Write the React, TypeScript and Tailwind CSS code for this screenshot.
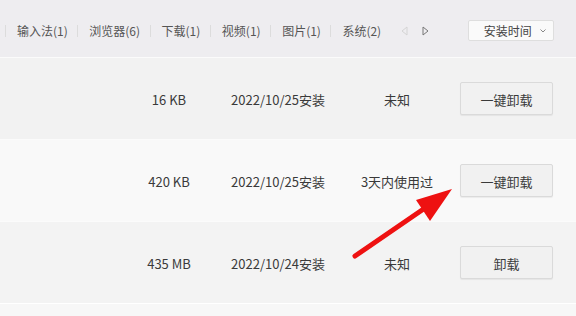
import React from 'react';

const tabs = ['输入法(1)', '浏览器(6)', '下载(1)', '视频(1)', '图片(1)', '系统(2)'];

const rows = [
  { size: '16 KB', date: '2022/10/25安装', status: '未知', action: '一键卸载', bg: 'bg-[#f2f2f2]' },
  { size: '420 KB', date: '2022/10/25安装', status: '3天内使用过', action: '一键卸载', bg: 'bg-[#f9f9f9]' },
  { size: '435 MB', date: '2022/10/24安装', status: '未知', action: '卸载', bg: 'bg-[#f3f3f3]' },
];

const App: React.FC = () => {
  return (
    <div
      className="relative w-[576px] h-[316px] overflow-hidden bg-[#f7f7f7] text-[#333]"
      style={{ fontFamily: '"Microsoft YaHei", "Noto Sans CJK SC", "Noto Sans", sans-serif' }}
    >
      {/* Tab bar */}
      <div className="h-[57px] bg-[#eeedf0] flex items-center pl-[5px] pt-[4px] text-[12px] text-[#555]">
        {tabs.map(t => (
          <div key={t} className="flex items-center">
            <span className="w-px h-[12px] bg-[#dcdcdc]" />
            <span className="ml-[11px] mr-[9.5px] whitespace-nowrap">{t}</span>
          </div>
        ))}
        <div className="flex items-center ml-[10px] gap-[14px]">
          <svg width="7" height="10" viewBox="0 0 7 10">
            <path d="M6 1 L1 5 L6 9 Z" fill="none" stroke="#d4d4d4" strokeWidth="1" />
          </svg>
          <svg width="7" height="10" viewBox="0 0 7 10">
            <path d="M1 1 L6 5 L1 9 Z" fill="none" stroke="#777" strokeWidth="1" />
          </svg>
        </div>
        <div className="ml-[39px] w-[86px] h-[21px] bg-[#fafafa] border border-[#dedede] rounded-[2px] flex items-center pl-[15px] pr-[7px]">
          <span className="text-[12px] text-[#444]">安装时间</span>
          <svg className="ml-auto" width="6" height="4" viewBox="0 0 6 4">
            <path d="M0.5 0.5 L3 3 L5.5 0.5" fill="none" stroke="#888" strokeWidth="1" />
          </svg>
        </div>
      </div>

      {/* Rows */}
      {rows.map((r, i) => (
        <div
          key={i}
          className={`h-[82px] ${r.bg} border-t border-[#fbfbfb] flex items-center text-[13px] text-[#3a3a3a]`}
        >
          <div className="w-[130px]" />
          <div className="w-[78px] pt-[3px] text-center whitespace-nowrap">{r.size}</div>
          <div className="w-[140px] pt-[3px] text-center whitespace-nowrap">{r.date}</div>
          <div className="w-[98px] pt-[3px] text-center whitespace-nowrap">{r.status}</div>
          <button className="ml-[14px] w-[93px] h-[33px] pt-[2px] bg-[#f1f1f1] border border-[#dadada] rounded-[2px] shadow-[0_1px_1px_rgba(0,0,0,0.06)] text-[13px] text-[#3a3a3a]">
            {r.action}
          </button>
        </div>
      ))}
      <div className="h-px bg-white" />

      {/* Red annotation arrow */}
      <svg className="absolute left-0 top-0 pointer-events-none" width="576" height="316">
        <line x1="355" y1="256" x2="425" y2="208" stroke="#ee1111" strokeWidth="5" strokeLinecap="round" />
        <polygon points="452,189 416,200 430,221" fill="#ee1111" />
      </svg>
    </div>
  );
};

export default App;
